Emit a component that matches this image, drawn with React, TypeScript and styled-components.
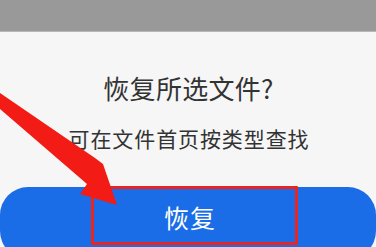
import React from "react";
import styled, { createGlobalStyle } from "styled-components";

const Global = createGlobalStyle`
  html, body { margin: 0; padding: 0; overflow: hidden; }
  body { background: #f6f6f6; font-family: "Noto Sans CJK SC", "Noto Sans", sans-serif; }
`;

const Screen = styled.div`
  width: 376px;
  height: 247px;
  display: flex;
  flex-direction: column;
  overflow: hidden;
  position: relative;
  background: #f6f6f6;
`;

const Scrim = styled.div`
  height: 32px;
  flex: none;
  background: #999999;
  border-bottom: 1px solid #b8b8b8;
  box-sizing: border-box;
`;

const Sheet = styled.div`
  flex: 1;
  display: flex;
  flex-direction: column;
  align-items: center;
  padding-top: 39px;
`;

const Title = styled.div`
  font-size: 26px;
  line-height: 34px;
  letter-spacing: 0.3px;
  color: #333333;
  margin-left: 1px;
`;

const Subtitle = styled.div`
  margin-top: 19px;
  font-size: 21px;
  line-height: 28px;
  letter-spacing: 0.9px;
  color: #333333;
  margin-left: 2px;
`;

const Action = styled.div`
  position: relative;
  margin-top: 35px;
  width: 376px;
  height: 72px;
  flex: none;
  border-radius: 28px;
  background: #1a6de6;
  color: #ffffff;
  display: flex;
  justify-content: center;
  padding-top: 14px;
  box-sizing: border-box;
  font-size: 25px;
  line-height: 32px;
  letter-spacing: 1px;
`;

const ActionLabel = styled.span`
  margin-left: 4px;
`;

const Highlight = styled.div`
  position: absolute;
  left: 91px;
  top: -1px;
  width: 207px;
  height: 59px;
  border: 3px solid #ea2420;
  box-sizing: border-box;
  border-radius: 1px;
`;

const Arrow = styled.svg`
  position: absolute;
  left: 0;
  top: 0;
  pointer-events: none;
`;

export default function App() {
  return (
    <>
      <Global />
      <Screen>
        <Scrim />
        <Sheet>
          <Title>恢复所选文件?</Title>
          <Subtitle>可在文件首页按类型查找</Subtitle>
          <Action>
            <ActionLabel>恢复</ActionLabel>
            <Highlight />
          </Action>
        </Sheet>
        <Arrow width="376" height="247" viewBox="0 0 376 247">
          <polygon
            points="0,93 95,158 103,164 117,205 80,194 87,184 0,109"
            fill="#f21b16"
          />
        </Arrow>
      </Screen>
    </>
  );
}
